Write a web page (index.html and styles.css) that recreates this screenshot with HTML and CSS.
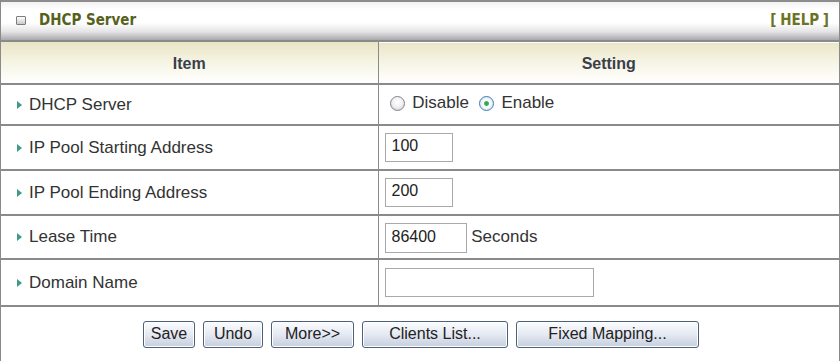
FILE: index.html
```html
<!DOCTYPE html>
<html lang="en">
<head>
    <meta charset="UTF-8">
    <title>DHCP Server</title>
    <link rel="stylesheet" href="styles.css">
</head>
<body>
    <div class="panel">
        <div class="title-bar">
            <span class="title"><span class="title-icon"></span>DHCP Server</span>
            <a href="#" class="help">[ HELP ]</a>
        </div>

        <table class="settings">
            <tr class="head">
                <th class="col-item">Item</th>
                <th>Setting</th>
            </tr>
            <tr class="row-1">
                <td class="item">DHCP Server</td>
                <td>
                    <label class="radio"><input type="radio" name="dhcp" value="0"> Disable</label>
                    <label class="radio"><input type="radio" name="dhcp" value="1" checked> Enable</label>
                </td>
            </tr>
            <tr class="row-2">
                <td class="item">IP Pool Starting Address</td>
                <td><input type="text" class="field field-short" value="100"></td>
            </tr>
            <tr class="row-3">
                <td class="item">IP Pool Ending Address</td>
                <td><input type="text" class="field field-short" value="200"></td>
            </tr>
            <tr class="row-4">
                <td class="item">Lease Time</td>
                <td><input type="text" class="field field-lease" value="86400"> <span class="unit">Seconds</span></td>
            </tr>
            <tr class="row-5">
                <td class="item">Domain Name</td>
                <td><input type="text" class="field field-long" value=""></td>
            </tr>
            <tr class="actions">
                <td colspan="2">
                    <div class="buttons">
                        <button class="btn btn-save">Save</button>
                        <button class="btn btn-undo">Undo</button>
                        <button class="btn btn-more">More&gt;&gt;</button>
                        <button class="btn btn-clients">Clients List...</button>
                        <button class="btn btn-fixed">Fixed Mapping...</button>
                    </div>
                </td>
            </tr>
        </table>
    </div>
</body>
</html>
```

FILE: styles.css
```css
/* General */
* {
    margin: 0;
    padding: 0;
    box-sizing: border-box;
}

body {
    background: #fff;
    font-family: Arial, "Liberation Sans", sans-serif;
    color: #333;
    width: 840px;
    height: 361px;
    overflow: hidden;
}

.panel {
    width: 840px;
    border-left: 1px solid #8a8a8a;
    border-right: 1px solid #8a8a8a;
    border-bottom: 1px solid #8a8a8a;
}

/* Title bar */
.title-bar {
    height: 40px;
    display: flex;
    justify-content: space-between;
    align-items: center;
    padding: 0 10px 2px 15px;
    border-top: 2px solid #8c8c8c;
    background: linear-gradient(to bottom, #f2f2f2 0%, #ffffff 20%, #ffffff 55%, #e4e4e6 78%, #a9a9ad 100%);
}

.title {
    display: flex;
    align-items: center;
    font-family: Tahoma, "DejaVu Sans Condensed", "DejaVu Sans", sans-serif;
    font-weight: bold;
    font-size: 15px;
    color: #56621c;
}

.title-icon {
    width: 10px;
    height: 9px;
    margin-right: 13px;
    border: 1px solid #7d7d7d;
    border-radius: 1px;
    background: linear-gradient(to bottom, #ffffff, #c9c9c9);
}

.help {
    font-family: Tahoma, "DejaVu Sans Condensed", "DejaVu Sans", sans-serif;
    font-weight: bold;
    font-size: 15px;
    color: #6b7424;
    text-decoration: none;
    word-spacing: -1px;
}

/* Table */
.settings {
    width: 100%;
    border-collapse: collapse;
    font-size: 17px;
}

.settings th,
.settings td {
    border-top: 2px solid #8a8a8a;
    text-align: left;
    vertical-align: middle;
}

.settings th + th,
.settings td + td {
    border-left: 1px solid #8a8a8a;
}

.head th {
    height: 43px;
    text-align: center;
    font-size: 16px;
    font-weight: bold;
    color: #3a3f4a;
    background: linear-gradient(to bottom, #e9e5c6 0%, #f6f4e4 50%, #ffffff 100%);
    padding-top: 2px;
}

.col-item {
    width: 377px;
}

.row-1 td { height: 41px; }
.row-2 td { height: 45px; }
.row-3 td { height: 45px; }
.row-4 td { height: 44px; }
.row-5 td { height: 47px; }

.settings td {
    padding-left: 6px;
}

.item {
    padding-left: 28px !important;
    position: relative;
    color: #333;
}

.item::before {
    content: "";
    position: absolute;
    left: 16px;
    top: 50%;
    margin-top: -4px;
    border-left: 5px solid #3f9a86;
    border-top: 4px solid transparent;
    border-bottom: 4px solid transparent;
}

/* Radio */
.radio {
    display: inline-flex;
    align-items: center;
    white-space: pre;
}

.radio input {
    appearance: none;
    -webkit-appearance: none;
    width: 15px;
    height: 15px;
    margin: 0 3px 0 5px;
    border: 1px solid #80858e;
    border-radius: 50%;
    background: radial-gradient(circle at 50% 40%, #ffffff 0%, #f2f2f2 45%, #c6c8cc 100%);
}

.radio input:checked {
    border-color: #3f7fb3;
    background: radial-gradient(circle, #2ea14a 0, #45b05e 2px, #ffffff 3px, #eef3f8 5px, #c9d6e4 100%);
}

/* Text fields */
.field {
    height: 29px;
    border: 1px solid #a9a9a9;
    font-family: Arial, "Liberation Sans", sans-serif;
    font-size: 16px;
    color: #222;
    padding: 0 0 3px 6px;
    vertical-align: middle;
}

.field-short { width: 68px; }
.field-lease { width: 82px; height: 30px; margin-top: 2px; }
.field-long { width: 209px; }

.unit {
    vertical-align: middle;
}

/* Buttons */
.actions td {
    height: 55px;
    padding: 0 !important;
}

.buttons {
    display: flex;
    padding-left: 142px;
    gap: 8px;
}

.btn {
    height: 27px;
    font-family: Arial, "Liberation Sans", sans-serif;
    font-size: 16px;
    color: #222;
    border: 1px solid #4e6078;
    border-radius: 3px;
    background: linear-gradient(to bottom, #fbfcfe 0%, #e4e9f2 50%, #c6cfdd 100%);
    box-shadow: inset 0 0 0 1px #ffffff;
}

.btn-save { width: 52px; }
.btn-undo { width: 60px; }
.btn-more { width: 83px; }
.btn-clients { width: 146px; }
.btn-fixed { width: 183px; }
```
